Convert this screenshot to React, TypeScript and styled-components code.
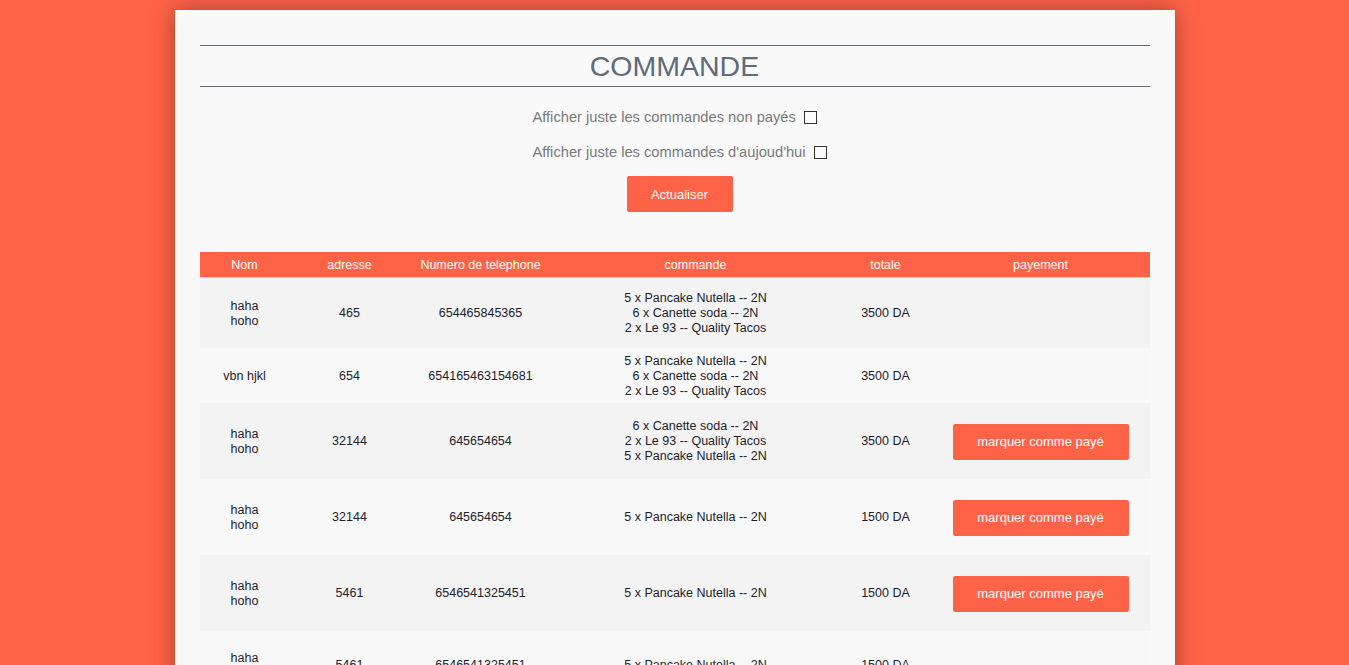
import React from "react";
import styled, { createGlobalStyle } from "styled-components";

const Global = createGlobalStyle`
  html, body { margin: 0; padding: 0; }
  body {
    background: #ff6347;
    font-family: "Liberation Sans", Arial, sans-serif;
    overflow: hidden;
  }
`;

const Page = styled.div`
  padding-top: 10px;
  display: flex;
  justify-content: center;
`;

const Card = styled.div`
  width: 1000px;
  min-height: 700px;
  box-sizing: border-box;
  background: #f9f9f9;
  box-shadow: 0 0 22px rgba(0, 0, 0, 0.35);
  padding: 35px 25px 40px;
`;

const Title = styled.h1`
  margin: 0;
  border-top: 1px solid #5d6b7a;
  border-bottom: 1px solid #5d6b7a;
  height: 40px;
  line-height: 40px;
  text-align: center;
  font-size: 28.5px;
  font-weight: 400;
  color: #5d6b7a;
`;

const Controls = styled.div`
  display: flex;
  flex-direction: column;
  align-items: center;
  padding-left: 10px;
`;

const Filters = styled.div`
  display: flex;
  flex-direction: column;
  align-items: flex-start;
  gap: 18px;
  margin-top: 22px;
`;

const FilterLabel = styled.label`
  display: flex;
  align-items: center;
  gap: 8px;
  font-size: 14.7px;
  line-height: 17px;
  color: #7a7a7a;
`;

const Check = styled.input`
  appearance: none;
  margin: 0;
  width: 13px;
  height: 13px;
  box-sizing: border-box;
  border: 1px solid #333;
  background: #fbfbfb;
`;

const Button = styled.button<{ $w: number }>`
  width: ${(p) => p.$w}px;
  height: 36px;
  border: none;
  border-radius: 2px;
  background: #ff6347;
  color: #fff;
  font-family: "Liberation Sans", Arial, sans-serif;
  font-size: 13px;
  cursor: pointer;
`;

const RefreshWrap = styled.div`
  margin-top: 15px;
  display: flex;
  justify-content: center;
`;

const Table = styled.table`
  width: 950px;
  margin-top: 40px;
  border-collapse: collapse;
  table-layout: fixed;
  font-size: 12.5px;
`;

const HeadCell = styled.th`
  height: 25px;
  padding: 0;
  background: #ff6347;
  color: #fff;
  font-weight: 400;
  text-align: center;
  border-bottom: 1px solid #c9d3dd;
`;

const Row = styled.tr<{ $odd: boolean; $h: number }>`
  background: ${(p) => (p.$odd ? "#f3f3f3" : "#f8f8f8")};
  height: ${(p) => p.$h}px;
`;

const Cell = styled.td`
  padding: 2px 0 0;
  text-align: center;
  vertical-align: middle;
  color: #1d1d2b;
  line-height: 15px;
`;

const Line = styled.div``;

const cols = [90, 120, 142, 288, 92, 218];
const heads = ["Nom", "adresse", "Numero de telephone", "commande", "totale", "payement"];

type Order = {
  nom: string[];
  adresse: string;
  tel: string;
  items: string[];
  total: string;
  pay: boolean;
  h: number;
};

const PN = "5 x Pancake Nutella -- 2N";
const CS = "6 x Canette soda -- 2N";
const QT = "2 x Le 93 -- Quality Tacos";

const orders: Order[] = [
  { nom: ["haha", "hoho"], adresse: "465", tel: "654465845365", items: [PN, CS, QT], total: "3500 DA", pay: false, h: 70 },
  { nom: ["vbn hjkl"], adresse: "654", tel: "654165463154681", items: [PN, CS, QT], total: "3500 DA", pay: false, h: 55 },
  { nom: ["haha", "hoho"], adresse: "32144", tel: "645654654", items: [CS, QT, PN], total: "3500 DA", pay: true, h: 76 },
  { nom: ["haha", "hoho"], adresse: "32144", tel: "645654654", items: [PN], total: "1500 DA", pay: true, h: 76 },
  { nom: ["haha", "hoho"], adresse: "5461", tel: "6546541325451", items: [PN], total: "1500 DA", pay: true, h: 76 },
  { nom: ["haha", "hoho"], adresse: "5461", tel: "6546541325451", items: [PN], total: "1500 DA", pay: false, h: 68 },
];

export default function App() {
  return (
    <>
      <Global />
      <Page>
        <Card>
          <Title>COMMANDE</Title>
          <Controls>
            <Filters>
              <FilterLabel>
                Afficher juste les commandes non payés
                <Check type="checkbox" />
              </FilterLabel>
              <FilterLabel>
                Afficher juste les commandes d'aujoud'hui
                <Check type="checkbox" />
              </FilterLabel>
            </Filters>
            <RefreshWrap>
              <Button $w={106}>Actualiser</Button>
            </RefreshWrap>
          </Controls>
          <Table>
            <colgroup>
              {cols.map((w, i) => (
                <col key={i} style={{ width: w }} />
              ))}
            </colgroup>
            <thead>
              <tr>
                {heads.map((h) => (
                  <HeadCell key={h}>{h}</HeadCell>
                ))}
              </tr>
            </thead>
            <tbody>
              {orders.map((o, i) => (
                <Row key={i} $odd={i % 2 === 0} $h={o.h}>
                  <Cell>
                    {o.nom.map((n) => (
                      <Line key={n}>{n}</Line>
                    ))}
                  </Cell>
                  <Cell>{o.adresse}</Cell>
                  <Cell>{o.tel}</Cell>
                  <Cell>
                    {o.items.map((it) => (
                      <Line key={it}>{it}</Line>
                    ))}
                  </Cell>
                  <Cell>{o.total}</Cell>
                  <Cell>{o.pay && <Button $w={176}>marquer comme payé</Button>}</Cell>
                </Row>
              ))}
            </tbody>
          </Table>
        </Card>
      </Page>
    </>
  );
}
